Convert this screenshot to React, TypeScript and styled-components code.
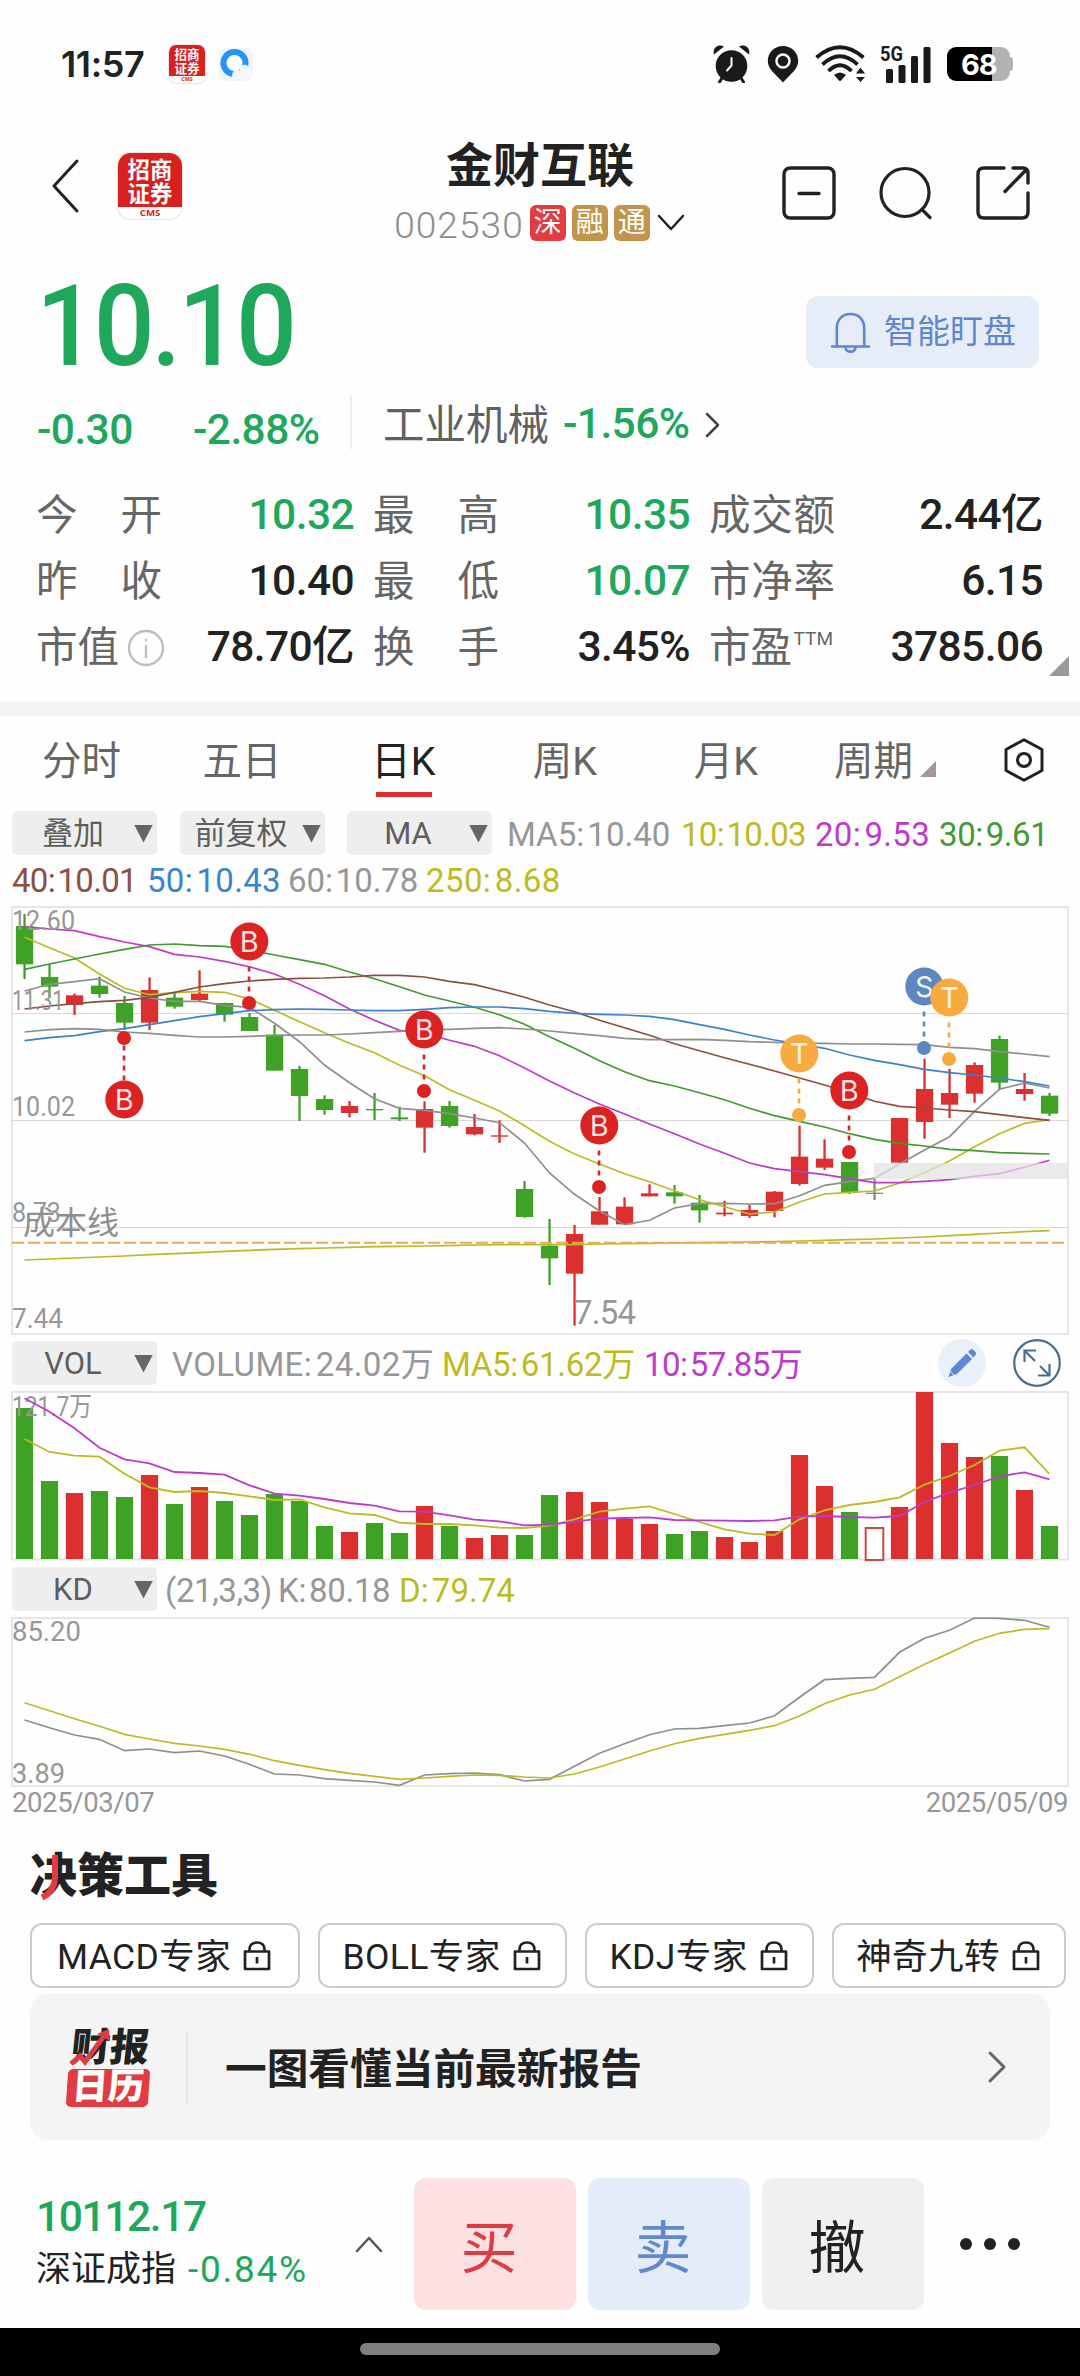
import React from 'react';
import styled, { createGlobalStyle } from 'styled-components';

const SANS = `Roboto, "Noto Sans CJK SC", sans-serif`;
const GREEN = '#1fa75c';
const INK = '#222222';
const UP = '#dc2f2f';
const DOWN = '#3fa227';
const OLIVE = '#bdbb22';
const GREY = '#97979a';
const MAGENTA = '#bf3acb';

const Global = createGlobalStyle`
  *, *::before, *::after { box-sizing: border-box; }
  body { margin: 0; background: #fff; font-family: ${SANS}; color: ${INK}; }
  svg { display: block; flex: none; }
`;

const Screen = styled.div`
  width: 1080px;
  height: 2376px;
  overflow: hidden;
  display: flex;
  flex-direction: column;
  background: #fefefe;
  white-space: nowrap;
  & > * { flex: none; }
`;

/* ---------- status bar ---------- */
const StatusBar = styled.div`
  height: 132px;
  padding: 0 67px 4px 61px;
  display: flex;
  align-items: center;
`;
const Clock = styled.span`
  width: 108px;
  font: 600 36px/40px Inter, ${SANS};
  letter-spacing: -0.4px;
`;
const StatusIcons = styled.div`
  margin-left: auto;
  display: flex;
  align-items: center;
`;
const Gap = styled.span<{ $w: number }>`
  flex: none;
  width: ${p => p.$w}px;
`;
const Battery = styled.div`
  width: 66px;
  height: 34px;
  display: flex;
  align-items: center;
`;
const BatteryBody = styled.div`
  width: 63px;
  height: 34px;
  padding-left: 14px;
  border-radius: 9px;
  background: linear-gradient(90deg, #000 0 45px, #b2b2b2 45px);
  color: #fff;
  font: 700 29px/35px Inter, ${SANS};
  letter-spacing: -1px;
`;
const BatteryTip = styled.div`
  width: 3px;
  height: 14px;
  border-radius: 0 4px 4px 0;
  background: #b2b2b2;
`;

/* ---------- brand tile ---------- */
const Tile = styled.div<{ $s: number }>`
  width: ${p => p.$s}px;
  height: ${p => p.$s * 1.03}px;
  border-radius: ${p => p.$s * 0.2}px;
  overflow: hidden;
  background: linear-gradient(#d8201f 0 82%, #fff 82%);
  box-shadow: 0 0 2px rgba(0, 0, 0, 0.35);
  display: flex;
  flex-direction: column;
  align-items: center;
  justify-content: space-between;
  flex: none;
`;
const TileText = styled.div<{ $s: number }>`
  padding-top: ${p => p.$s * 0.045}px;
  color: #fff;
  font: 700 ${p => p.$s * 0.35}px/${p => p.$s * 0.375}px "Noto Sans CJK SC", sans-serif;
  text-align: center;
`;
const TileFoot = styled.div<{ $s: number }>`
  color: #d8201f;
  font: 700 ${p => p.$s * 0.15}px/${p => p.$s * 0.18}px "Open Sans", ${SANS};
`;
const BrandTile = ({ size }: { size: number }) => (
  <Tile $s={size}>
    <TileText $s={size}>招商<br />证券</TileText>
    <TileFoot $s={size}>CMS</TileFoot>
  </Tile>
);

/* ---------- header ---------- */
const Header = styled.header`
  height: 131px;
  padding: 0 50px 0 50px;
  display: grid;
  grid-template-columns: 346px 288px 1fr;
`;
const HeaderLeft = styled.div`
  display: flex;
  align-items: center;
  gap: 38px;
  height: 108px;
`;
const Titles = styled.div`
  display: flex;
  flex-direction: column;
  align-items: center;
`;
const StockName = styled.h1`
  margin: 7px 0 0;
  font: 700 47px/54px ${SANS};
`;
const CodeRow = styled.div`
  margin-top: 12px;
  height: 36px;
  display: flex;
  align-items: center;
  gap: 6px;
`;
const Code = styled.span`
  font: 300 37px/36px ${SANS};
  color: #8d8d8d;
  padding-top: 5px;
  letter-spacing: 1.1px;
`;
const Badge = styled.span<{ $bg: string }>`
  width: 36px;
  height: 36px;
  border-radius: 6px;
  background: ${p => p.$bg};
  color: #fff;
  font: 400 28px/36px ${SANS};
  text-align: center;
`;
const HeaderIcons = styled.div`
  display: flex;
  justify-content: space-between;
  align-items: flex-start;
  padding: 34px 0 0 98px;
`;

/* ---------- quote ---------- */
const PriceRow = styled.div`
  height: 130px;
  padding: 0 41px 0 36px;
  display: flex;
  align-items: center;
  justify-content: space-between;
`;
const Price = styled.div`
  margin-top: -4px;
  font: 500 114px/130px ${SANS};
  letter-spacing: -3.3px;
  color: ${GREEN};
  transform: scaleX(0.94);
  transform-origin: 0 50%;
`;
const WatchButton = styled.button`
  width: 233px;
  height: 72px;
  margin-top: 8px;
  padding: 0 0 0 24px;
  border: 0;
  border-radius: 12px;
  background: #e6edf9;
  color: #5f87cf;
  display: flex;
  align-items: center;
  gap: 13px;
  font: 400 33px/40px ${SANS};
`;
const ChangeRow = styled.div`
  height: 73px;
  padding-left: 37px;
  display: flex;
  align-items: center;
  color: ${GREEN};
  & > svg { margin-top: -10px; }
`;
const Num = styled.span<{ $c?: string; $w?: number; $up?: number }>`
  flex: none;
  width: ${p => (p.$w ? `${p.$w}px` : 'auto')};
  font: 500 42.5px/48px ${SANS};
  letter-spacing: -0.6px;
  color: ${p => p.$c || 'inherit'};
  margin-top: ${p => p.$up || 0}px;
`;
const Rule = styled.span<{ $h: number; $c: string; $up?: number }>`
  width: 2px;
  height: ${p => p.$h}px;
  margin-top: ${p => p.$up || 0}px;
  background: ${p => p.$c};
  flex: none;
`;
const Sector = styled.span`
  font: 400 41.5px/48px ${SANS};
  color: #606060;
  margin: -8px 14px 0 31px;
`;
const StatGrid = styled.div`
  height: 213px;
  padding: 15px 37px 0 36px;
  display: grid;
  grid-template-columns: 318px 19px 317px 19px 334px;
  grid-template-rows: repeat(3, 66px);
`;
const Stat = styled.div<{ $col: number }>`
  grid-column: ${p => p.$col};
  padding-top: 1px;
  display: flex;
  align-items: center;
  justify-content: space-between;
`;
const StatLabel = styled.span`
  width: 126px;
  padding-top: 2px;
  display: flex;
  align-items: center;
  justify-content: space-between;
  font: 400 41.5px/60px ${SANS};
  color: #666;
  & > svg { margin-right: -3px; }
`;
const Sup = styled.sup`
  font: 400 19px/24px ${SANS};
  align-self: flex-start;
  margin: 9px 2px 0 0;
`;
const CornerBox = styled.div`
  height: 20px;
  margin-top: -23px;
  display: flex;
  justify-content: flex-end;
  padding-right: 11px;
`;
const Corner = styled.i<{ $s: number; $c: string }>`
  width: ${p => p.$s}px;
  height: ${p => p.$s}px;
  flex: none;
  background: ${p => p.$c};
  clip-path: polygon(100% 0, 100% 100%, 0 100%);
`;
const Band = styled.div`
  margin-top: 25px;
  height: 15px;
  background: #f4f4f4;
`;

/* ---------- tabs ---------- */
const Tabs = styled.nav`
  height: 95px;
  padding: 0 0 6px 1px;
  display: grid;
  grid-template-columns: 161px 160px 163px 160px 162px 156px 1fr;
`;
const Tab = styled.button<{ $on?: boolean }>`
  border: 0;
  padding: 22px 0 0;
  background: none;
  color: ${p => (p.$on ? INK : '#666')};
  font: 400 39.5px/48px ${SANS};
  display: flex;
  flex-direction: column;
  align-items: center;
  gap: 6px;
`;
const Underline = styled.i`
  width: 56px;
  height: 5px;
  background: ${UP};
`;
const PeriodLabel = styled.span`
  display: flex;
  align-items: flex-end;
  gap: 7px;
  & > i { margin-bottom: 9px; }
`;
const TabIcon = styled.div`
  padding: 22px 0 0 41px;
`;

/* ---------- indicator rows ---------- */
const Legend = styled.div<{ $h?: number; $pt?: number }>`
  height: ${p => p.$h || 44}px;
  padding-left: 12px;
  display: flex;
  align-items: center;
`;
const Selector = styled.button<{ $mr: number }>`
  width: 145px;
  height: 44px;
  margin-right: ${p => p.$mr}px;
  padding: 1px 3px 0 0;
  border: 0;
  border-radius: 5px;
  background: #eeeeee;
  color: #5e5e5e;
  font: 400 31px/42px ${SANS};
  display: grid;
  grid-template-columns: 122px 19px;
  align-items: center;
  flex: none;
`;
const Caret = styled.i`
  width: 19px;
  height: 18px;
  background: #666;
  clip-path: polygon(0 0, 100% 0, 50% 100%);
`;
const Reading = styled.span<{ $c: string; $w: number; $ls?: number }>`
  flex: none;
  width: ${p => p.$w}px;
  padding-top: 3px;
  color: ${p => p.$c};
  font: 400 33px/40px ${SANS};
  letter-spacing: ${p => p.$ls ?? -0.6}px;
  word-spacing: -5px;
`;
const LowerReadings = styled(Legend)`
  padding-bottom: 3px;
`;
const Tools = styled.div`
  margin-left: auto;
  padding-right: 19px;
  display: flex;
  gap: 27px;
`;
const Dates = styled.div`
  height: 32px;
  padding: 0 12px;
  display: flex;
  justify-content: space-between;
  color: #97979a;
  font: 400 27.5px/32px ${SANS};
  letter-spacing: -0.4px;
`;

/* ---------- tools ---------- */
const SectionTitle = styled.h2`
  position: relative;
  margin: 24px 0 0 30px;
  width: 190px;
  height: 60px;
  font: 900 47px/66px ${SANS};
`;
const TitleStroke = styled.svg`
  position: absolute;
  left: 10px;
  top: 11px;
`;
const Chips = styled.div`
  margin-top: 20px;
  padding-left: 30px;
  height: 65px;
  display: flex;
  gap: 18px;
`;
const Chip = styled.button<{ $w: number }>`
  flex: none;
  width: ${p => p.$w}px;
  height: 65px;
  padding: 0 2px 0 0;
  border: 2px solid #ccc;
  border-radius: 12px;
  background: #fff;
  color: ${INK};
  display: flex;
  align-items: center;
  justify-content: center;
  gap: 12px;
  font: 400 35.5px/50px ${SANS};
  letter-spacing: 0.4px;
  & > span { padding-top: 3px; }
`;
const ReportCard = styled.div`
  margin: 6px 30px 0 30px;
  height: 146px;
  padding: 0 43px 0 37px;
  border-radius: 18px;
  background: #f4f4f4;
  display: flex;
  align-items: center;
`;
const ReportLogo = styled.div`
  position: relative;
  width: 84px;
  height: 80px;
  margin-right: 35px;
`;
const LogoTop = styled.div`
  height: 42px;
  padding-left: 4px;
  font: 900 39px/42px ${SANS};
  transform: skewX(-6deg);
`;
const LogoBottom = styled.div`
  width: 82px;
  height: 38px;
  border-radius: 5px;
  background: #e03c41;
  color: #fff;
  font: 900 36px/37px ${SANS};
  text-align: center;
  transform: skewX(-4deg);
`;
const LogoArrow = styled.svg`
  position: absolute;
  left: 0;
  top: 1px;
`;
const ReportText = styled.strong`
  margin-left: 37px;
  padding-top: 6px;
  flex: 1;
  font: 700 41.7px/60px ${SANS};
`;

/* ---------- trade bar ---------- */
const TradeBar = styled.footer`
  margin-top: 38px;
  height: 150px;
  padding: 0 0 0 36px;
  display: flex;
  align-items: flex-start;
  & > * { flex: none; }
`;
const IndexBlock = styled.div`
  width: 319px;
  padding-top: 15px;
  display: flex;
  flex-direction: column;
`;
const IndexValue = styled.div`
  font: 500 42.5px/48px ${SANS};
  letter-spacing: -1.4px;
  color: ${GREEN};
`;
const IndexName = styled.div`
  margin-top: 6px;
  font: 400 35px/46px ${SANS};
  display: flex;
  align-items: center;
  gap: 12px;
`;
const IndexChange = styled.span`
  color: ${GREEN};
  font-size: 37px;
  letter-spacing: 1.7px;
`;
const CaretUp = styled.div`
  width: 59px;
  padding-top: 57px;
`;
const TradeButton = styled.button<{ $bg: string; $c: string }>`
  width: 162px;
  height: 132px;
  margin-right: 12px;
  padding: 10px 12px 0 0;
  border: 0;
  border-radius: 12px;
  background: ${p => p.$bg};
  color: ${p => p.$c};
  font: 400 57px/80px ${SANS};
`;
const More = styled.div`
  padding: 59px 0 0 22px;
`;
const NavBar = styled.div`
  margin-top: auto;
  height: 48px;
  background: #000;
  display: flex;
  justify-content: center;
  padding-top: 15px;
`;
const NavPill = styled.div`
  width: 360px;
  height: 12px;
  border-radius: 6px;
  background: #808080;
`;

/* ---------- chart data ---------- */
// Each candle: colour, high, body top, body bottom, low; thirds of a pixel from the top of the price panel.
const CANDLES: [string, number, number, number, number][] = [
  ['g', 72, 108, 223, 267], ['g', 223, 261, 290, 323], ['r', 311, 316, 345, 375], ['g', 260, 287, 312, 323],
  ['g', 318, 339, 398, 420], ['r', 262, 300, 398, 420], ['g', 308, 323, 350, 356], ['r', 241, 311, 330, 333],
  ['g', 338, 339, 374, 395], ['g', 369, 381, 423, 423], ['g', 405, 434, 542, 542], ['g', 528, 537, 618, 693],
  ['g', 616, 627, 660, 674], ['r', 633, 648, 669, 682], ['g', 609, 657, 661, 690], ['g', 650, 682, 688, 693],
  ['r', 634, 657, 713, 788], ['g', 633, 648, 708, 713], ['r', 672, 711, 733, 736], ['r', 691, 736, 740, 759],
  ['g', 873, 897, 981, 983], ['g', 987, 1067, 1105, 1185], ['r', 1005, 1032, 1151, 1307], ['r', 921, 964, 1004, 1004],
  ['r', 922, 950, 1003, 1004], ['r', 883, 910, 919, 919], ['g', 885, 907, 919, 941], ['g', 915, 938, 961, 998],
  ['r', 932, 968, 973, 979], ['r', 944, 960, 978, 984], ['r', 903, 905, 963, 982], ['r', 707, 800, 882, 887],
  ['r', 748, 806, 833, 840], ['g', 816, 816, 908, 912], ['n', 862, 908, 912, 930], ['r', 684, 684, 818, 818],
  ['r', 506, 597, 696, 746], ['r', 537, 609, 644, 684], ['r', 517, 525, 611, 638], ['g', 437, 447, 578, 597],
  ['r', 549, 597, 612, 632], ['g', 609, 617, 671, 678],
];
const AVERAGES: [string, number[]][] = [
  ['#8f8f8f', [303, 283, 275, 266, 306, 324, 334, 334, 346, 352, 400, 455, 525, 578, 626, 655, 661, 671, 684, 698, 759, 849, 913, 963, 1004, 991, 954, 941, 940, 942, 941, 917, 886, 875, 865, 822, 780, 740, 664, 598, 579, 594]],
  [OLIVE, [142, 173, 204, 252, 295, 314, 308, 304, 307, 327, 361, 395, 428, 460, 488, 526, 557, 599, 631, 663, 707, 754, 792, 822, 851, 875, 902, 929, 950, 972, 966, 936, 912, 907, 903, 879, 848, 813, 770, 731, 700, 689]],
  [MAGENTA, [110, 117, 122, 140, 156, 170, 193, 201, 214, 230, 252, 283, 317, 357, 391, 421, 430, 451, 469, 497, 534, 573, 609, 642, 672, 702, 731, 762, 790, 819, 836, 845, 854, 866, 878, 878, 874, 869, 859, 851, 832, 811]],
  ['#449a32', [238, 222, 207, 192, 178, 165, 162, 167, 169, 180, 195, 209, 223, 246, 266, 290, 315, 333, 352, 374, 403, 440, 475, 512, 545, 572, 588, 608, 629, 655, 677, 694, 711, 731, 748, 760, 768, 778, 782, 788, 790, 792]],
  ['#8c4f42', [357, 348, 341, 335, 331, 322, 307, 291, 281, 273, 268, 265, 264, 261, 256, 256, 261, 274, 284, 302, 322, 345, 365, 391, 413, 436, 461, 482, 503, 523, 543, 564, 585, 608, 634, 649, 654, 660, 665, 674, 683, 691]],
  ['#3b82d0', [452, 443, 437, 425, 416, 404, 392, 380, 371, 362, 359, 357, 358, 360, 362, 362, 358, 353, 351, 351, 356, 364, 370, 373, 375, 379, 389, 404, 418, 435, 450, 462, 475, 495, 511, 524, 538, 548, 555, 564, 575, 588]],
  ['#8f8f8f', [426, 419, 416, 418, 426, 430, 436, 441, 441, 439, 436, 435, 435, 432, 428, 424, 420, 418, 415, 413, 417, 423, 430, 437, 445, 449, 449, 448, 451, 455, 457, 459, 460, 462, 462, 463, 464, 472, 476, 485, 492, 500]],
  [OLIVE, [1110, 1107, 1104, 1101, 1098, 1094, 1091, 1088, 1084, 1081, 1078, 1076, 1074, 1072, 1070, 1069, 1068, 1067, 1065, 1064, 1064, 1064, 1064, 1062, 1061, 1060, 1059, 1058, 1057, 1056, 1055, 1053, 1051, 1049, 1047, 1044, 1041, 1037, 1033, 1029, 1025, 1022]],
];
const VOLUMES: [string, number][] = [
  ['g', 234], ['g', 453], ['r', 489], ['g', 483], ['g', 501], ['r', 435], ['g', 522], ['r', 471], ['g', 513], ['g', 555],
  ['g', 492], ['g', 513], ['g', 588], ['r', 606], ['g', 579], ['g', 609], ['r', 528], ['g', 588], ['r', 624], ['r', 615],
  ['g', 615], ['g', 495], ['r', 486], ['r', 516], ['r', 567], ['r', 582], ['g', 612], ['g', 603], ['r', 621], ['r', 636],
  ['r', 603], ['r', 375], ['r', 468], ['g', 546], ['n', 591], ['r', 531], ['r', 186], ['r', 339], ['r', 381], ['g', 378],
  ['r', 480], ['g', 588],
];
const VOL5 = [327, 366, 377, 380, 431, 472, 486, 483, 489, 499, 510, 508, 532, 550, 555, 578, 582, 582, 586, 593, 594, 587, 568, 545, 536, 529, 552, 576, 598, 611, 615, 568, 541, 525, 516, 502, 464, 438, 405, 362, 352, 432];
const VOL10 = [205, 245, 295, 353, 388, 400, 426, 429, 434, 466, 491, 497, 507, 519, 527, 544, 545, 556, 569, 574, 586, 584, 575, 566, 564, 562, 570, 571, 572, 573, 571, 560, 558, 561, 563, 558, 516, 488, 465, 439, 427, 448];
const KLINE = [1170, 1193, 1215, 1228, 1262, 1257, 1268, 1263, 1278, 1303, 1332, 1335, 1346, 1351, 1356, 1366, 1335, 1331, 1329, 1334, 1353, 1348, 1309, 1270, 1241, 1214, 1197, 1195, 1187, 1179, 1157, 1102, 1049, 1045, 1042, 967, 925, 901, 864, 865, 871, 892];
const DLINE = [1118, 1142, 1166, 1189, 1213, 1227, 1240, 1248, 1258, 1273, 1292, 1306, 1319, 1330, 1339, 1348, 1344, 1339, 1335, 1336, 1341, 1344, 1332, 1311, 1287, 1263, 1241, 1225, 1213, 1201, 1187, 1158, 1121, 1095, 1078, 1040, 1003, 969, 934, 910, 898, 896];
const MARKS: [string, number, number, number][] = [
  ['B', 4, 1099.5, 1038], ['B', 9, 941.5, 1003], ['B', 16, 1029.5, 1091], ['B', 23, 1125.5, 1187],
  ['T', 31, 1053.5, 1115], ['B', 33, 1090.5, 1152], ['S', 36, 986.5, 1048], ['T', 37, 997.5, 1059],
];
const MARK_COLOR: Record<string, string> = { B: '#dd2222', T: '#f7ab3f', S: '#5d87c0' };
const TONE: Record<string, string> = { g: DOWN, r: UP, n: '#8a8a8a' };

const cx = (i: number) => 24.5 + i * 25;
const trace = (ys: number[], base: number) => ys.map((y, i) => `${cx(i)},${(base + y / 3).toFixed(1)}`).join(' ');

const AxisText = ({ x, y, w, children }: { x: number; y: number; w: number; children: string }) => (
  <text x={x} y={y} textLength={w} lengthAdjust="spacingAndGlyphs" fontSize="27" fill="#97979a" fontFamily={SANS}>{children}</text>
);

const PriceChart = () => (
  <svg width="1080" height="429" viewBox="0 906 1080 429">
    <rect x="12" y="907" width="1056" height="427" fill="none" stroke="#e6e6e6" strokeWidth="2" />
    {[1013.5, 1120.5, 1227.5].map(y => <path key={y} d={`M12 ${y}H1068`} stroke="#d9d9d9" />)}
    {CANDLES.map(([c, hi, top, bot, lo], i) => (
      <g key={i} fill={TONE[c]}>
        <rect x={cx(i) - 1.1} y={890 + hi / 3} width="2.3" height={(lo - hi) / 3} />
        <rect x={cx(i) - 8.6} y={890 + top / 3} width="17.3" height={(bot - top) / 3} />
      </g>
    ))}
    {AVERAGES.map(([c, ys], i) => (
      <polyline key={i} points={trace(ys, 890)} fill="none" stroke={c} strokeWidth="1.7" />
    ))}
    <path d="M12 1242.7H1068" stroke="#e8ab55" strokeWidth="2" strokeDasharray="12 4" />
    <rect x="874" y="1163" width="194" height="16" fill="#e2e2e2" fillOpacity="0.72" />
    <AxisText x={12} y={930} w={63}>12.60</AxisText>
    <AxisText x={12} y={1010} w={52}>11.31</AxisText>
    <AxisText x={12} y={1116} w={63}>10.02</AxisText>
    <AxisText x={12} y={1222} w={49}>8.73</AxisText>
    <AxisText x={12} y={1328} w={51}>7.44</AxisText>
    <text x="23" y="1234" textLength="96" fontSize="32" fill="#8f8f8f" fontFamily={SANS}>成本线</text>
    <text x="574" y="1324" textLength="62" fontSize="33" fill="#97979a" fontFamily={SANS}>7.54</text>
    {MARKS.map(([t, i, y, dot]) => {
      const x = cx(i) - 0.5;
      return (
        <g key={i} fill={MARK_COLOR[t]}>
          <path d={dot > y ? `M${x} ${y + 25}V${dot - 7}` : `M${x} ${y - 19}V${dot + 7}`} stroke={MARK_COLOR[t]} strokeWidth="2.6" strokeDasharray="5 5" />
          <circle cx={x} cy={dot} r="7" />
          <circle cx={x + 0.3} cy={y} r="19" />
          <text x={x + 0.3} y={y + 10.5} textAnchor="middle" fontSize="29" fill="#fff" fillOpacity="0.88" fontFamily={`Inter, ${SANS}`}>{t}</text>
        </g>
      );
    })}
  </svg>
);

const VolumeChart = () => (
  <svg width="1080" height="170" viewBox="0 1391 1080 170">
    <rect x="12" y="1392" width="1056" height="167.5" fill="none" stroke="#e6e6e6" strokeWidth="2" />
    {VOLUMES.map(([c, top], i) => c === 'n'
      ? <rect key={i} x={cx(i) - 8.8} y={1330 + top / 3 + 1} width="17.6" height={(687 - top) / 3} fill="#fff" stroke="#c94a45" strokeWidth="2" />
      : <rect key={i} x={cx(i) - 8.6} y={1330 + top / 3} width="17.2" height={(687 - top) / 3} fill={TONE[c]} />)}
    <AxisText x={12} y={1416} w={80}>121.7万</AxisText>
    <polyline points={trace(VOL5, 1330)} fill="none" stroke={OLIVE} strokeWidth="1.8" />
    <polyline points={trace(VOL10, 1330)} fill="none" stroke={MAGENTA} strokeWidth="1.8" />
  </svg>
);

const KdChart = () => (
  <svg width="1080" height="170" viewBox="0 1617 1080 170">
    <rect x="12" y="1618" width="1056" height="168" fill="none" stroke="#e6e6e6" strokeWidth="2" />
    <AxisText x={12} y={1641} w={69}>85.20</AxisText>
    <AxisText x={12} y={1783} w={53}>3.89</AxisText>
    <polyline points={trace(KLINE, 1330)} fill="none" stroke="#8f8f8f" strokeWidth="1.7" />
    <polyline points={trace(DLINE, 1330)} fill="none" stroke={OLIVE} strokeWidth="1.7" />
  </svg>
);

/* ---------- icons ---------- */
const Chevron = ({ w, h, d, sw = 2.5, c = INK }: { w: number; h: number; d: string; sw?: number; c?: string }) => (
  <svg width={w} height={h} viewBox={`0 0 ${w} ${h}`} fill="none" stroke={c} strokeWidth={sw} strokeLinecap="round" strokeLinejoin="round">
    <path d={d} />
  </svg>
);
const AlarmIcon = () => (
  <svg width="37" height="38" viewBox="0 0 37 38">
    <circle cx="18.5" cy="21" r="15.8" fill="#1a1a1a" />
    <path d="M1 9.500C-1 3 5.500 -1.500 11 1.500ZM36 9.500C38 3 31.500 -1.500 26 1.500Z" fill="#1a1a1a" />
    <path d="M9 33L6.500 37M28 33L30.500 37" stroke="#1a1a1a" strokeWidth="3" strokeLinecap="round" />
    <path d="M18.500 13V20.500L14 25.500" stroke="#fff" strokeWidth="2" fill="none" strokeLinecap="round" />
  </svg>
);
const PinIcon = () => (
  <svg width="32" height="38" viewBox="0 0 32 38">
    <path d="M16 1C7.500 1 .8 7.600 .8 16C.8 24 8 28.500 16 37.500C24 28.500 31.200 24 31.200 16C31.200 7.600 24.500 1 16 1Z" fill="#1a1a1a" />
    <circle cx="16" cy="16" r="6.500" fill="#1a1a1a" stroke="#fff" strokeWidth="2.500" />
  </svg>
);
const WifiIcon = () => (
  <svg width="52" height="38" viewBox="0 0 52 38" fill="none" stroke="#1a1a1a" strokeWidth="3.800">
    <path d="M1.500 12.500Q25 -8 48.500 12.500M7.500 19.500Q25 3 42.500 19.500M13.500 26Q25 14.500 36.500 26" />
    <path d="M19 30Q25 25 31 30L25 36.500Z" fill="#1a1a1a" stroke="none" />
    <path d="M40 29H51L45.500 22ZM40 31.500H51L45.500 37.500Z" fill="#1a1a1a" stroke="#fff" strokeWidth="1" />
  </svg>
);
const SignalIcon = () => (
  <svg width="52" height="40" viewBox="0 0 52 40" fill="#1a1a1a">
    <text x="0" y="17" fontSize="21" fontWeight="700" textLength="23" lengthAdjust="spacingAndGlyphs" fontFamily={SANS}>5G</text>
    <rect x="6" y="25" width="7" height="14" rx="1.500" />
    <rect x="18.500" y="21" width="7" height="18" rx="1.500" />
    <rect x="31" y="12" width="7" height="27" rx="1.500" />
    <rect x="43.500" y="3" width="7" height="36" rx="1.500" />
  </svg>
);
const BrowserIcon = () => (
  <svg width="36" height="36" viewBox="0 0 36 36">
    <rect x="1" y="2" width="34" height="33" rx="8" fill="#eef4fd" />
    <circle cx="16.500" cy="17" r="11" fill="#fff" stroke="#2493f3" strokeWidth="6" />
    <path d="M15 33C12 26 18 22 21.500 24.500C22 17 31 17 31.500 23.500C36 24 36 33 31 33Z" fill="#f4f8fe" />
  </svg>
);
const BellIcon = () => (
  <svg width="41" height="41" viewBox="0 0 41 41" fill="none" stroke="#5f87cf" strokeWidth="2.600" strokeLinecap="round" strokeLinejoin="round">
    <path d="M2 34.500H39M6.800 34V16C6.800 7.500 12.500 2 20.500 2S34.200 7.500 34.200 16V34M15.500 35.500C15.500 41 25.500 41 25.500 35.500" />
  </svg>
);
const MinusBoxIcon = () => (
  <svg width="54" height="54" viewBox="0 0 54 54" fill="none" stroke={INK} strokeWidth="3.400" strokeLinecap="round">
    <rect x="2" y="2" width="50" height="50" rx="6" />
    <path d="M17 27.500H37" />
  </svg>
);
const SearchIcon = () => (
  <svg width="54" height="54" viewBox="0 0 54 54" fill="none" stroke={INK} strokeWidth="3.200" strokeLinecap="round">
    <circle cx="26" cy="26.500" r="24" />
    <path d="M43 43.500L51 51.500" />
  </svg>
);
const ShareIcon = () => (
  <svg width="54" height="54" viewBox="0 0 54 54" fill="none" stroke={INK} strokeWidth="3.400" strokeLinecap="round">
    <path d="M28 2H8Q2 2 2 8V46Q2 52 8 52H46Q52 52 52 46V27M37 2H47Q52 2 52 8V17M50 4L29 25.500" />
  </svg>
);
const HexIcon = () => (
  <svg width="40" height="44" viewBox="0 0 40 44" fill="none" stroke={INK} strokeWidth="3" strokeLinejoin="round">
    <path d="M20 1.800L38 11.500V32.500L20 42.200L2 32.500V11.500Z" />
    <circle cx="20" cy="22" r="6.500" />
  </svg>
);
const InfoIcon = () => (
  <svg width="38" height="38" viewBox="0 0 38 38" fill="none" stroke="#bdbdbd" strokeWidth="2.400" strokeLinecap="round">
    <circle cx="19" cy="19" r="17" />
    <path d="M19 17V28M19 11V11.500" />
  </svg>
);
const LockIcon = () => (
  <svg width="28" height="30" viewBox="0 0 28 30" fill="none" stroke={INK} strokeWidth="2.700" strokeLinejoin="round">
    <path d="M2 10.500H26V28H2ZM6.500 10V8.500C6.500 4 9.500 1.500 14 1.500S21.500 4 21.500 8.500V10M14 16V22.500" />
  </svg>
);
const PencilIcon = () => (
  <svg width="48" height="48" viewBox="0 0 48 48">
    <circle cx="24" cy="24" r="24" fill="#eaf0fa" />
    <path d="M10.500 38L13.500 29.500L28.500 14.500L34 20L19 35Z" fill="#5f87d4" />
    <path d="M30 13L32.500 10.500Q34 9.500 35.500 11L37.500 13Q38.700 14.500 37.500 16L35.500 18.500Z" fill="#5f87d4" />
    <path d="M13 33L16 36" stroke="#eaf0fa" strokeWidth="1" />
  </svg>
);
const ExpandIcon = () => (
  <svg width="48" height="48" viewBox="0 0 48 48" fill="none" stroke="#4b6e90" strokeWidth="2.200">
    <circle cx="24" cy="24" r="22.800" />
    <path d="M23 11.500H11.500V23M11.500 11.500L22 22M25 36.500H36.500V25M36.500 36.500L27 27" />
  </svg>
);

const STATS: { label: string[]; value: string; c: string; extra?: 'info' | 'ttm' }[] = [
  { label: ['今', '开'], value: '10.32', c: GREEN },
  { label: ['最', '高'], value: '10.35', c: GREEN },
  { label: ['成', '交', '额'], value: '2.44亿', c: INK },
  { label: ['昨', '收'], value: '10.40', c: INK },
  { label: ['最', '低'], value: '10.07', c: GREEN },
  { label: ['市', '净', '率'], value: '6.15', c: INK },
  { label: ['市值'], value: '78.70亿', c: INK, extra: 'info' },
  { label: ['换', '手'], value: '3.45%', c: INK },
  { label: ['市盈'], value: '3785.06', c: INK, extra: 'ttm' },
];

const PickerButton = ({ label, mr }: { label: string; mr: number }) => (
  <Selector $mr={mr}><span>{label}</span><Caret /></Selector>
);

export default function App() {
  return (
    <Screen>
      <Global />
      <StatusBar>
        <Clock>11:57</Clock>
        <BrandTile size={36} />
        <Gap $w={13} />
        <BrowserIcon />
        <StatusIcons>
          <AlarmIcon /><Gap $w={17} />
          <PinIcon /><Gap $w={16} />
          <WifiIcon /><Gap $w={13} />
          <SignalIcon /><Gap $w={15} />
          <Battery><BatteryBody>68</BatteryBody><BatteryTip /></Battery>
        </StatusIcons>
      </StatusBar>

      <Header>
        <HeaderLeft>
          <Chevron w={30} h={56} sw={3} d="M27 3L4 28L27 53" />
          <BrandTile size={64} />
        </HeaderLeft>
        <Titles>
          <StockName>金财互联</StockName>
          <CodeRow>
            <Code>002530</Code>
            <Badge $bg="#e23b41">深</Badge>
            <Badge $bg="#c2954a">融</Badge>
            <Badge $bg="#c2954a">通</Badge>
            <Chevron w={30} h={18} d="M3 2L15 15L27 2" />
          </CodeRow>
        </Titles>
        <HeaderIcons>
          <MinusBoxIcon /><SearchIcon /><ShareIcon />
        </HeaderIcons>
      </Header>

      <PriceRow>
        <Price>10.10</Price>
        <WatchButton><BellIcon />智能盯盘</WatchButton>
      </PriceRow>
      <ChangeRow>
        <Num $w={156} $up={0}>-0.30</Num>
        <Num $w={157} $up={0}>-2.88%</Num>
        <Rule $h={54} $c="#eeeeee" $up={-16} />
        <Sector>工业机械</Sector>
        <Num $w={123} $up={-12}>-1.56%</Num>
        <Gap $w={17} />
        <Chevron w={18} h={28} d="M4 3L15 14L4 25" c="#444" />
      </ChangeRow>
      <StatGrid>
        {STATS.map((s, i) => (
          <Stat key={i} $col={(i % 3) * 2 + 1}>
            <StatLabel>
              {s.label.map(ch => <span key={ch}>{ch}</span>)}
              {s.extra === 'info' && <InfoIcon />}
              {s.extra === 'ttm' && <Sup>TTM</Sup>}
            </StatLabel>
            <Num $c={s.c}>{s.value}</Num>
          </Stat>
        ))}
      </StatGrid>
      <CornerBox><Corner $s={20} $c="#999" /></CornerBox>
      <Band />

      <Tabs>
        <Tab>分时</Tab>
        <Tab>五日</Tab>
        <Tab $on>日K<Underline /></Tab>
        <Tab>周K</Tab>
        <Tab>月K</Tab>
        <Tab><PeriodLabel>周期<Corner $s={16} $c="#a39a98" /></PeriodLabel></Tab>
        <TabIcon><HexIcon /></TabIcon>
      </Tabs>

      <Legend>
        <PickerButton label="叠加" mr={23} />
        <PickerButton label="前复权" mr={22} />
        <PickerButton label="MA" mr={15} />
        <Reading $c={GREY} $w={174} $ls={0}>MA5: 10.40</Reading>
        <Reading $c={OLIVE} $w={134} $ls={-0.7}>10: 10.03</Reading>
        <Reading $c={MAGENTA} $w={124} $ls={0.3}>20: 9.53</Reading>
        <Reading $c="#449a32" $w={110} $ls={-0.4}>30: 9.61</Reading>
      </Legend>
      <LowerReadings $h={51}>
        <Reading $c="#8c4f42" $w={135} $ls={-0.7}>40: 10.01</Reading>
        <Reading $c="#3b82d0" $w={141} $ls={0.3}>50: 10.43</Reading>
        <Reading $c={GREY} $w={138} $ls={-0.1}>60: 10.78</Reading>
        <Reading $c={OLIVE} $w={140} $ls={0.4}>250: 8.68</Reading>
      </LowerReadings>
      <PriceChart />

      <Legend $h={56}>
        <PickerButton label="VOL" mr={15} />
        <Reading $c={GREY} $w={270} $ls={0.4}>VOLUME: 24.02万</Reading>
        <Reading $c={OLIVE} $w={202} $ls={-0.3}>MA5: 61.62万</Reading>
        <Reading $c={MAGENTA} $w={160}>10: 57.85万</Reading>
        <Tools><PencilIcon /><ExpandIcon /></Tools>
      </Legend>
      <VolumeChart />
      <Legend $h={56}>
        <PickerButton label="KD" mr={8} />
        <Reading $c={GREY} $w={113} $ls={-0.4}>(21,3,3)</Reading>
        <Reading $c={GREY} $w={121} $ls={-0.3}>K: 80.18</Reading>
        <Reading $c={OLIVE} $w={120} $ls={0}>D: 79.74</Reading>
      </Legend>
      <KdChart />
      <Dates><span>2025/03/07</span><span>2025/05/09</span></Dates>

      <SectionTitle>
        决策工具
        <TitleStroke width="20" height="48" viewBox="0 0 20 48" fill="none" stroke="#e23b41" strokeWidth="6">
          <path d="M15 1V24Q14 38 2 43.500" />
        </TitleStroke>
      </SectionTitle>
      <Chips>
        <Chip $w={270}><span>MACD专家</span><LockIcon /></Chip>
        <Chip $w={249}><span>BOLL专家</span><LockIcon /></Chip>
        <Chip $w={229}><span>KDJ专家</span><LockIcon /></Chip>
        <Chip $w={234}><span>神奇九转</span><LockIcon /></Chip>
      </Chips>
      <ReportCard>
        <ReportLogo>
          <LogoTop>财报</LogoTop>
          <LogoBottom>日历</LogoBottom>
          <LogoArrow width="46" height="40" viewBox="0 0 46 40" fill="none" stroke="#e03c41" strokeWidth="5">
            <path d="M4 36L13 28L18 34L37 8" />
            <path d="M30 6L42 1L43 13Z" fill="#e03c41" stroke="none" />
          </LogoArrow>
        </ReportLogo>
        <Rule $h={72} $c="#e4e4e4" />
        <ReportText>一图看懂当前最新报告</ReportText>
        <Chevron w={20} h={34} sw={3} d="M3 3L17 17L3 31" c="#666" />
      </ReportCard>

      <TradeBar>
        <IndexBlock>
          <IndexValue>10112.17</IndexValue>
          <IndexName>深证成指<IndexChange>-0.84%</IndexChange></IndexName>
        </IndexBlock>
        <CaretUp><Chevron w={28} h={18} d="M2 16L14 3L26 16" c="#555" /></CaretUp>
        <TradeButton $bg="#fce0e2" $c="#dd3d42">买</TradeButton>
        <TradeButton $bg="#e5ecf9" $c="#6088cf">卖</TradeButton>
        <TradeButton $bg="#f0f0f0" $c={INK}>撤</TradeButton>
        <More>
          <svg width="64" height="14" viewBox="0 0 64 14" fill={INK}>
            <circle cx="8" cy="7" r="6" /><circle cx="32" cy="7" r="6" /><circle cx="56" cy="7" r="6" />
          </svg>
        </More>
      </TradeBar>
      <NavBar><NavPill /></NavBar>
    </Screen>
  );
}
